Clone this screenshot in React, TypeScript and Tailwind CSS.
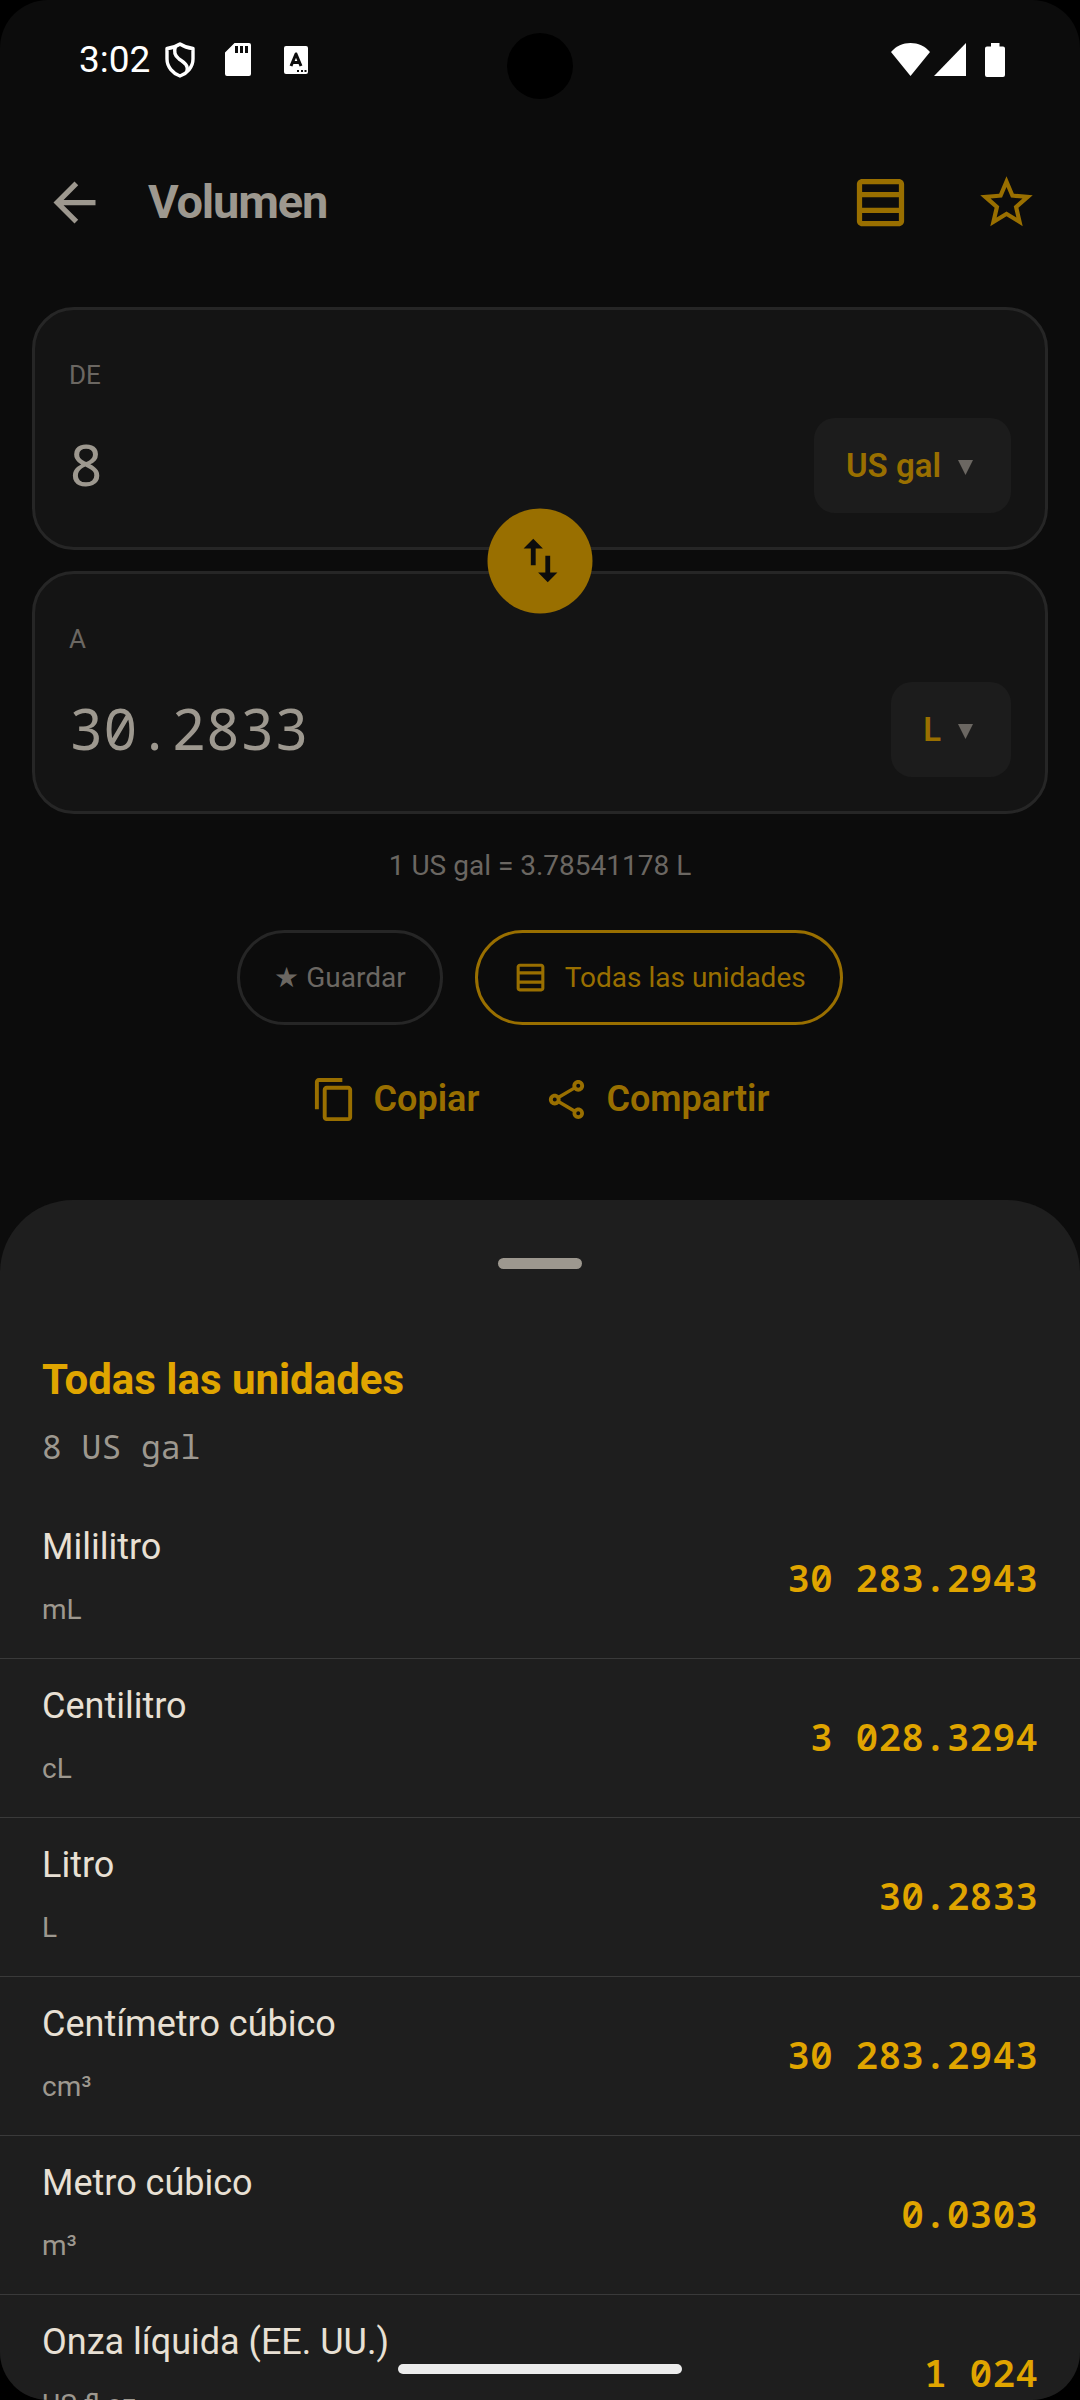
import { useState } from "react"
import { MdArrowBack, MdContentCopy, MdOutlineShare, MdStarOutline, MdSwapVert } from "react-icons/md"

const UNITS = [
  { name: "Mililitro", symbol: "mL", value: "30 283.2943" },
  { name: "Centilitro", symbol: "cL", value: "3 028.3294" },
  { name: "Litro", symbol: "L", value: "30.2833" },
  { name: "Centímetro cúbico", symbol: "cm³", value: "30 283.2943" },
  { name: "Metro cúbico", symbol: "m³", value: "0.0303" },
  { name: "Onza líquida (EE. UU.)", symbol: "US fl oz", value: "1 024" },
]

export default function App() {
  return (
    <div className="h-screen bg-black font-['Roboto',sans-serif]">
      <div className="relative flex h-full flex-col overflow-hidden rounded-[48px] bg-[#0c0c0c]">
        <StatusBar />
        <Header />
        <Converter />
        <UnitsSheet />
        <div className="absolute bottom-[26px] left-1/2 h-[10px] w-[284px] -translate-x-1/2 rounded-full bg-[#ececec]" />
      </div>
    </div>
  )
}

function StatusBar() {
  return (
    <div className="flex h-[119px] shrink-0 items-center justify-between pl-[79px] pr-[75px] text-white">
      <div className="flex items-center">
        <span className="text-[37px] leading-[44px]">3:02</span>
        <svg className="ml-[15px] h-[36px] w-[30px]" viewBox="0 0 30 36" fill="none" stroke="currentColor" strokeWidth="3.4">
          <path d="M15 2C18 4 23 6 28 6.500V17c0 8-6 14.500-13 17C8 31.500 2 25 2 17V6.500C7 6 12 4 15 2Z" strokeLinejoin="round" />
          <path d="M10.500 4.500C8.500 10 10 14 14 17c6 4 9.500 6.500 8 12.500" />
        </svg>
        <svg className="ml-[30px] h-[33px] w-[26px]" viewBox="0 0 26 33">
          <path
            fill="currentColor"
            fillRule="evenodd"
            d="M9.500 0H24a2 2 0 0 1 2 2v29a2 2 0 0 1-2 2H2a2 2 0 0 1-2-2V9.500L9.500 0ZM10 3v7h3V3h-3Zm5 0v7h3V3h-3Zm5 0v7h3V3h-3Z"
          />
        </svg>
        <svg className="ml-[33px] h-[28px] w-[24px]" viewBox="0 0 24 28">
          <rect width="24" height="28" rx="2" fill="currentColor" />
          <path d="M7 20 12 8l5 12M8.500 16.500h7" fill="none" stroke="#0c0c0c" strokeWidth="3" strokeLinejoin="round" />
          <path d="M13 25h2M17 25h2M20.500 25h2" stroke="#0c0c0c" strokeWidth="2" />
        </svg>
      </div>
      <div className="absolute left-1/2 top-[33px] size-[66px] -translate-x-1/2 rounded-full bg-black" />
      <div className="flex items-center">
        <svg className="h-[33px] w-[39px]" viewBox="0 0 39 33" fill="currentColor">
          <path d="M19.500 33 0 9C5 3 12 0 19.500 0S34 3 39 9L19.500 33Z" />
        </svg>
        <svg className="ml-[4px] h-[33px] w-[32px]" viewBox="0 0 32 33" fill="currentColor">
          <path d="M32 0v33H0L32 0Z" />
        </svg>
        <svg className="ml-[19px] h-[34px] w-[20px]" viewBox="0 0 20 34" fill="currentColor">
          <path d="M6 0h8.500v3.500H18a2 2 0 0 1 2 2V32a2 2 0 0 1-2 2H2a2 2 0 0 1-2-2V5.500a2 2 0 0 1 2-2h4V0Z" />
        </svg>
      </div>
    </div>
  )
}

function Header() {
  return (
    <header className="mt-[20px] flex h-[126px] shrink-0 items-center px-[11px] text-[#996f00]">
      <button aria-label="Atrás" className="flex size-[126px] items-center justify-center text-[#9d988f]">
        <MdArrowBack className="size-[63px]" />
      </button>
      <h1 className="ml-[11px] flex-1 text-[47px] font-bold leading-[56px] tracking-tight text-[#9d988f]">Volumen</h1>
      <button aria-label="Todas las unidades" className="flex size-[126px] items-center justify-center">
        <TableRowsIcon className="size-[63px]" />
      </button>
      <button aria-label="Favorito" className="flex size-[126px] items-center justify-center">
        <MdStarOutline className="size-[63px]" />
      </button>
    </header>
  )
}

function Converter() {
  const [amount, setAmount] = useState("8")

  return (
    <main className="mt-[42px] flex flex-col px-8">
      <div className="relative flex flex-col gap-[21px]">
        <section className="rounded-[42px] border-3 border-[#262626] bg-[#141414] px-[34px] pb-[34px] pt-[49px]">
          <label htmlFor="amount" className="mb-[27px] block text-[26px] leading-[32px] text-[#6b6762]">
            DE
          </label>
          <div className="flex h-[95px] items-center justify-between gap-8">
            <input
              id="amount"
              inputMode="decimal"
              value={amount}
              onChange={(e) => setAmount(e.target.value)}
              className="min-w-0 flex-1 bg-transparent pb-1 font-['Droid_Sans_Mono','Noto_Sans_Mono','DejaVu_Sans_Mono',monospace] text-[57px] leading-[68px] text-[#9d988f] outline-none"
            />
            <UnitSelect label="Unidad de origen" value="US gal" />
          </div>
        </section>
        <section className="rounded-[42px] border-3 border-[#262626] bg-[#141414] px-[34px] pb-[34px] pt-[49px]">
          <label htmlFor="result" className="mb-[27px] block text-[26px] leading-[32px] text-[#6b6762]">
            A
          </label>
          <div className="flex h-[95px] items-center justify-between gap-8">
            <output
              id="result"
              className="pb-1 font-['Droid_Sans_Mono','Noto_Sans_Mono','DejaVu_Sans_Mono',monospace] text-[57px] leading-[68px] text-[#9d988f]"
            >
              30.2833
            </output>
            <UnitSelect label="Unidad de destino" value="L" />
          </div>
        </section>
        <button
          aria-label="Intercambiar"
          className="absolute left-1/2 top-1/2 flex size-[105px] -translate-x-1/2 -translate-y-1/2 items-center justify-center rounded-full bg-[#996f00] text-[#0c0c0c]"
        >
          <MdSwapVert className="size-[58px]" />
        </button>
      </div>

      <p className="mt-[35px] text-center text-[28px] leading-[34px] text-[#6b6762]">1 US gal = 3.78541178 L</p>

      <div className="mt-[47px] flex justify-center gap-8">
        <button className="h-[95px] rounded-full border-3 border-[#262626] px-[34px] text-[28px] leading-[34px] text-[#6b6762]">
          ★ Guardar
        </button>
        <button className="flex h-[95px] items-center gap-[16px] rounded-full border-3 border-[#996f00] px-[34px] text-[28px] leading-[34px] text-[#996f00]">
          <TableRowsIcon className="size-[37px]" />
          Todas las unidades
        </button>
      </div>

      <div className="mt-[51px] flex justify-center gap-[64px] text-[36px] font-semibold leading-[47px] text-[#996f00]">
        <button className="flex items-center gap-[16px]">
          <MdContentCopy className="size-[47px]" />
          Copiar
        </button>
        <button className="flex items-center gap-[16px]">
          <MdOutlineShare className="size-[47px]" />
          Compartir
        </button>
      </div>
    </main>
  )
}

function UnitSelect({ label, value }: { label: string; value: string }) {
  return (
    <div className="relative">
      <select
        aria-label={label}
        defaultValue={value}
        className="field-sizing-content h-[95px] appearance-none rounded-[21px] bg-[#1c1c1c] pl-[32px] pr-[70px] text-[33px] font-semibold leading-[40px] text-[#996f00]"
      >
        <option>US gal</option>
        {UNITS.map((unit) => (
          <option key={unit.symbol}>{unit.symbol}</option>
        ))}
      </select>
      <svg
        className="pointer-events-none absolute right-[38px] top-[42px] h-[15px] w-[15px] text-[#6b6762]"
        viewBox="0 0 15 15"
        fill="currentColor"
      >
        <path d="M0 0h15L7.500 15 0 0Z" />
      </svg>
    </div>
  )
}

function UnitsSheet() {
  return (
    <section className="absolute inset-x-0 bottom-0 top-1/2 overflow-hidden rounded-t-[73px] bg-[#1e1e1e]">
      <div className="mx-auto mt-[58px] h-[11px] w-[84px] rounded-full bg-[#9d988f]" />
      <h2 className="mt-[86px] px-[42px] text-[42px] font-bold leading-[50px] text-[#e0a500]">Todas las unidades</h2>
      <p className="mt-[22px] px-[42px] font-['Droid_Sans_Mono','Noto_Sans_Mono','DejaVu_Sans_Mono',monospace] text-[33px] leading-[40px] text-[#9d988f]">
        8 US gal
      </p>
      <ul className="mt-[33px]">
        {UNITS.map((unit) => (
          <li
            key={unit.name}
            className="flex h-[159px] items-center justify-between border-b border-[#3a3a3a] px-[42px]"
          >
            <div className="flex flex-col gap-[20px] pb-[2px]">
              <span className="text-[36px] leading-[43px] text-[#e8e0d4]">{unit.name}</span>
              <span className="text-[28px] leading-[42px] text-[#9d988f]">{unit.symbol}</span>
            </div>
            <span className="pb-1 font-['Droid_Sans_Mono','Noto_Sans_Mono','DejaVu_Sans_Mono',monospace] text-[38px] font-semibold leading-[44px] text-[#e0a500]">
              {unit.value}
            </span>
          </li>
        ))}
      </ul>
    </section>
  )
}

function TableRowsIcon({ className }: { className?: string }) {
  return (
    <svg className={className} viewBox="0 0 24 24" fill="currentColor">
      <path d="M19 3H5c-1.100 0-2 .9-2 2v14c0 1.100.9 2 2 2h14c1.100 0 2-.9 2-2V5c0-1.100-.9-2-2-2Zm0 2v3H5V5h14Zm0 9H5v-4h14v4ZM5 19v-3h14v3H5Z" />
    </svg>
  )
}
